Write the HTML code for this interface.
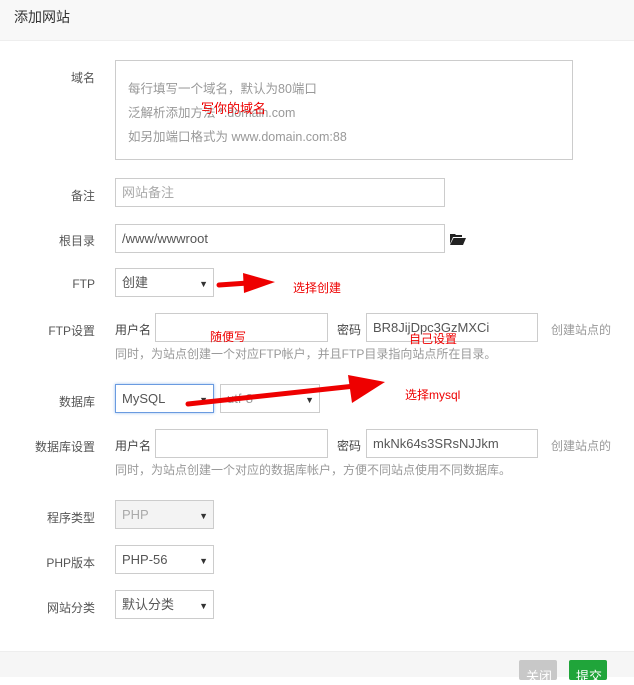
<!DOCTYPE html>
<html><head><meta charset="utf-8"><style>
*{box-sizing:border-box;margin:0;padding:0}
body{width:634px;height:677px;overflow:hidden;background:#fff;font-family:"Liberation Sans","Noto Sans CJK SC",sans-serif;font-size:12px;color:#555;position:relative}
.a{position:absolute}
.hd{left:0;top:0;width:634px;height:41px;background:#f8f8f8;border-bottom:1px solid #eee;font-size:14px;color:#333;padding:7px 0 0 14px}
.lb{right:539px;text-align:right;color:#555;white-space:nowrap}
.in{border:1px solid #ccc;background:#fff;height:29px;padding:6px 6px;line-height:15px;color:#555;font-size:13px;white-space:nowrap}
.sel:after{content:"▼";position:absolute;right:5px;top:8px;font-size:9px;color:#333}
.ph{color:#aaa}
.red{color:#e00;font-size:12px}
.gray{color:#999}
</style></head><body>
<div class="a hd">添加网站</div>
<div class="a lb" style="top:69px">域名</div>
<div class="a in" style="left:115px;top:60px;width:458px;height:100px;padding:16px 12px;line-height:24px;color:#999;font-size:12.5px">每行填写一个域名，默认为80端口<br>泛解析添加方法 *.domain.com<br>如另加端口格式为 www.domain.com:88</div>
<div class="a red" style="left:201px;top:98px;font-size:13px">写你的域名</div>
<div class="a lb" style="top:187px">备注</div>
<div class="a in ph" style="left:115px;top:178px;width:330px">网站备注</div>
<div class="a lb" style="top:232px">根目录</div>
<div class="a in" style="left:115px;top:224px;width:330px">/www/wwwroot</div>
<svg class="a" style="left:450px;top:233px" width="16" height="12" viewBox="0 0 16 12"><path d="M0 1h5l1 1h6v2H3L0 11z" fill="#222"/><path d="M3.5 5H16l-3 7H0z" fill="#222"/></svg>
<div class="a lb" style="top:277px">FTP</div>
<div class="a in sel" style="left:115px;top:268px;width:99px">创建</div>
<svg class="a" style="left:215px;top:268px" width="70" height="30"><path d="M4 17 L33 15" stroke="#e00" stroke-width="5" stroke-linecap="round"/><path d="M28 5 L60 14 L29 25z" fill="#e00"/></svg>
<div class="a red" style="left:293px;top:279px">选择创建</div>
<div class="a lb" style="top:322px">FTP设置</div>
<div class="a" style="left:115px;top:321px;color:#444">用户名</div>
<div class="a in" style="left:155px;top:313px;width:173px"></div>
<div class="a red" style="left:210px;top:328px">随便写</div>
<div class="a" style="left:337px;top:321px;color:#444">密码</div>
<div class="a in" style="left:366px;top:313px;width:172px">BR8JijDpc3GzMXCi</div>
<div class="a red" style="left:409px;top:330px">自己设置</div>
<div class="a gray" style="left:551px;top:321px">创建站点的</div>
<div class="a gray" style="left:115px;top:345px">同时，为站点创建一个对应FTP帐户，并且FTP目录指向站点所在目录。</div>
<div class="a lb" style="top:393px">数据库</div>
<div class="a in sel" style="left:115px;top:384px;width:99px;border-color:#6a9be0;box-shadow:0 0 3px #9bc0f0">MySQL</div>
<div class="a in sel" style="left:220px;top:384px;width:100px;color:#999">utf-8</div>
<svg class="a" style="left:180px;top:370px" width="210" height="45"><path d="M8 34 L175 16" stroke="#e00" stroke-width="5" stroke-linecap="round"/><path d="M168 5 L205 12 L172 33z" fill="#e00"/></svg>
<div class="a red" style="left:405px;top:386px">选择mysql</div>
<div class="a lb" style="top:438px">数据库设置</div>
<div class="a" style="left:115px;top:437px;color:#444">用户名</div>
<div class="a in" style="left:155px;top:429px;width:173px"></div>
<div class="a" style="left:337px;top:437px;color:#444">密码</div>
<div class="a in" style="left:366px;top:429px;width:172px">mkNk64s3SRsNJJkm</div>
<div class="a gray" style="left:551px;top:437px">创建站点的</div>
<div class="a gray" style="left:115px;top:461px">同时，为站点创建一个对应的数据库帐户，方便不同站点使用不同数据库。</div>
<div class="a lb" style="top:509px">程序类型</div>
<div class="a in sel" style="left:115px;top:500px;width:99px;background:#f3f3f3;color:#aaa">PHP</div>
<div class="a lb" style="top:554px">PHP版本</div>
<div class="a in sel" style="left:115px;top:545px;width:99px">PHP-56</div>
<div class="a lb" style="top:599px">网站分类</div>
<div class="a in sel" style="left:115px;top:590px;width:99px">默认分类</div>
<div class="a" style="left:0;top:651px;width:634px;height:26px;background:#f6f6f6;border-top:1px solid #eee"></div>
<div class="a" style="left:519px;top:660px;width:38px;height:20px;background:#c8c8c8;border-radius:2px;color:#fff;padding:6px 0 0 7px;font-size:13px">关闭</div>
<div class="a" style="left:569px;top:660px;width:38px;height:20px;background:#20a53a;border-radius:2px;color:#fff;padding:6px 0 0 7px;font-size:13px">提交</div>
</body></html>
